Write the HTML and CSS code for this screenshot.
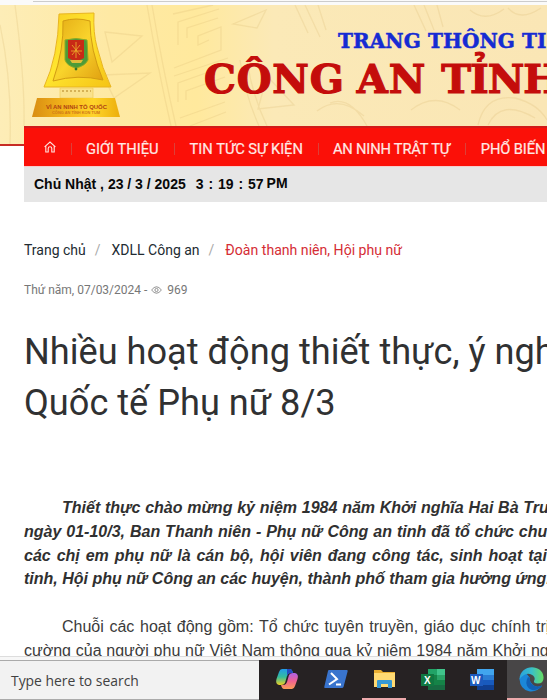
FILE: index.html
```html
<!DOCTYPE html>
<html lang="vi">
<head>
<meta charset="utf-8">
<title>Công an tỉnh</title>
<link rel="stylesheet" href="styles.css">
</head>
<body>
<div class="chrome"></div>
<header class="banner">
  <svg class="pattern" width="547" height="139" viewBox="0 5 547 139" fill="none" stroke="#d9ba72" stroke-opacity=".24" stroke-width="1.3">
    <path d="M0 25Q12 80 10 144M15 5Q25 80 24 126M105 32L142 36L112 62ZM103 75L150 73L114 98ZM147 5Q158 70 171 126M152 5Q163 70 176 126"/>
    <path d="M173 14L213 5M178 45V22L219 9M187 38V28L218 18M174 68L221 50V27L198 36V45L209 40M174 76L228 58M178 102V83L220 68M186 100V91L225 77M180 118L225 102M190 126L226 112"/>
    <path d="M233 24L266 10L257 28ZM295 5L308 33M305 5L320 37M318 5L326 30M414 5L426 31M424 5L434 30M437 5L443 27M267 76L294 105L258 109ZM240 60Q245 95 259 126M247 60Q252 95 267 126M317 111Q339 94 364 116M330 103Q350 95 367 126M411 110Q435 91 460 110M478 125Q485 94 515 98Q538 104 547 120M488 125Q501 98 535 118M470 10Q485 23 504 9M508 8Q520 22 541 8"/>
  </svg>
  <svg class="logo" width="90" height="108" viewBox="32 12 90 108">
    <defs>
      <linearGradient id="gold" x1="0" y1="0" x2="1" y2="1"><stop offset="0" stop-color="#f8cd22"/><stop offset=".45" stop-color="#ffe52f"/><stop offset="1" stop-color="#f5c316"/></linearGradient>
      <linearGradient id="inner" x1="0" y1="0" x2="1" y2="1"><stop offset="0" stop-color="#e3aa14"/><stop offset=".5" stop-color="#f9d42c"/><stop offset="1" stop-color="#e0a010"/></linearGradient>
      <linearGradient id="base"><stop offset="0" stop-color="#d98d12"/><stop offset=".45" stop-color="#f8bd1d"/><stop offset=".7" stop-color="#ffd52b"/><stop offset="1" stop-color="#ecae0c"/></linearGradient>
    </defs>
    <path d="M59 14L94 13Q93 33 97 47Q102 68 111 87L44 87Q58 57 59 14Z" fill="url(#gold)" stroke="#e9b51f"/>
    <path d="M63 21Q76 17 90 21Q90 50 103 80Q78 74 53 81Q64 49 63 21Z" fill="url(#inner)" stroke="#d29b13"/>
    <path d="M60 88H93V98H60Z" fill="#fae28c" stroke="#efca51" stroke-width=".6"/>
    <path d="M62 91H91" stroke="#d6b257" stroke-width="2" stroke-dasharray="2 2"/>
    <path d="M37 98H115L120 117H32Z" fill="url(#base)"/>
    <path d="M65 40Q76 37 87 40L88 60Q85 66 76 68Q67 66 65 60Z" fill="#4d9b38" stroke="#8baa28"/>
    <path d="M68 40H84V58L76 62L68 58Z" fill="#c82a16"/>
    <path d="M76 42V58M72 45L80 55M80 45L72 55M71 51H82" stroke="#edb52b" stroke-width=".8"/>
    <path d="M70 60H83L81 63H72Z" fill="#e1bd39"/><circle cx="76" cy="69" r="1.4" fill="#377527"/>
    <text x="46" y="109.4" textLength="61" lengthAdjust="spacingAndGlyphs" class="logo-main">VÌ AN NINH TỔ QUỐC</text>
    <text x="52" y="114" textLength="48" lengthAdjust="spacingAndGlyphs" class="logo-sub">CÔNG AN TỈNH KON TUM</text>
  </svg>
  <div class="titles"><div class="portal">TRANG THÔNG TIN</div><div class="agency">CÔNG AN <span class="tinh">TỈNH</span></div></div>
</header>
<nav class="nav">
  <svg class="home" width="12" height="12" viewBox="0 0 12 12" fill="none" stroke="#ffe4df" stroke-width="1.1"><path d="M.6 5.8L6 1L11.4 5.8M1.8 5V11H4.2V7.5Q4.2 5.8 6 5.8T7.8 7.5V11H10.2V5"/></svg>
  <i class="sep"></i><span class="n1">GIỚI THIỆU</span><i class="sep"></i><span class="n2">TIN TỨC SỰ KIỆN</span><i class="sep"></i><span class="n3">AN NINH TRẬT TỰ</span><i class="sep"></i><span class="n4">PHỔ BIẾN</span>
</nav>
<div class="clock"><span class="date">Chủ Nhật , 23 / 3 / 2025</span><span class="time">3 : 19 : 57</span><span class="pm">PM</span></div>
<main>
  <div class="crumbs"><span class="c1">Trang chủ</span><i>/</i><span class="c2">XDLL Công an</span><i>/</i><span class="c3">Đoàn thanh niên, Hội phụ nữ</span></div>
  <div class="meta"><span class="posted">Thứ năm, 07/03/2024 -</span><svg width="11" height="8" viewBox="0 0 11 8" fill="none" stroke="#777" stroke-width=".8"><path d="M.6 4Q5.5-2.5 10.4 4Q5.5 10.5.6 4Z"/><circle cx="5.5" cy="4" r="1.6"/></svg><span>969</span></div>
  <h1><span class="h-a">Nhiều hoạt động thiết thực, ý nghĩa</span><br><span class="h-b">Quốc tế Phụ nữ 8/3</span></h1>
  <p class="lead"><span class="l1">Thiết thực chào mừng kỷ niệm 1984 năm Khởi nghĩa Hai Bà Trưng</span><span class="l2">ngày 01-10/3, Ban Thanh niên - Phụ nữ Công an tỉnh đã tổ chức chuỗi</span><span class="l3">các chị em phụ nữ là cán bộ, hội viên đang công tác, sinh hoạt tại</span><span class="l4">tỉnh, Hội phụ nữ Công an các huyện, thành phố tham gia hưởng ứng.</span></p>
  <p class="body"><span class="b1">Chuỗi các hoạt động gồm: Tổ chức tuyên truyền, giáo dục chính trị</span><span class="b2">cường của người phụ nữ Việt Nam thông qua kỷ niệm 1984 năm Khởi nghĩa</span></p>
</main>
<footer class="taskbar">
  <div class="search">Type here to search</div>
  <div class="apps">
    <div class="app"><svg width="24" height="24" viewBox="0 0 24 24"><defs><linearGradient id="ca" x1="0" y1="0" x2="0" y2="1"><stop stop-color="#219bea"/><stop offset=".5" stop-color="#35bc9b"/><stop offset="1" stop-color="#efcf22"/></linearGradient><linearGradient id="cb" x1="0" y1="0" x2="0" y2="1"><stop stop-color="#ad61e8"/><stop offset=".5" stop-color="#ef6192"/><stop offset="1" stop-color="#fb9c55"/></linearGradient></defs><path d="M7 2H15Q17 2 18 6H15Q13 6 12 9L10 16Q9 18 6 18H4Q0 17 1.500 12L4 5Q5 2 7 2Z" fill="url(#ca)"/><path d="M17 22H9Q7 22 6 18H9Q11 18 12 15L14 8Q15 6 18 6H20Q24 7 22.500 12L20 19Q19 22 17 22Z" fill="url(#cb)"/><path d="M12 2H15Q17 2 18 6H15Q13 6 12 9Z" fill="#244bc0"/></svg></div>
    <div class="app"><svg width="24" height="20" viewBox="0 0 24 20"><path d="M5 1H23Q24 1 23.600 2.500L19.500 18Q19 19 18 19H1Q0 19 .3 17.800L4 2Q4.200 1 5 1Z" fill="#3974cd"/><path d="M7 4L13 10L5 15.500M12 15.500H17" fill="none" stroke="#fff" stroke-width="2"/></svg></div>
    <div class="app open"><svg width="23" height="20" viewBox="0 0 23 20"><path d="M1 1H8L10 3H22V18H1Z" fill="#e9ae31"/><path d="M1 4H22V18H1Z" fill="#ffda72"/><path d="M4 19V12Q4 11 5 11H18Q19 11 19 12V19H15V15H8V19Z" fill="#3699d4"/></svg></div>
    <div class="app"><svg width="25" height="23" viewBox="0 0 25 23"><path d="M7 1H24V22H7Z" fill="#158347"/><path d="M7 1H16V7H7Z" fill="#21a366"/><path d="M16 1H24V7H16Z" fill="#40c48b"/><path d="M16 7H24V12H16Z" fill="#2aa367"/><path d="M7 17H24V22H7Z" fill="#176b42"/><path d="M0 6H13V18H0Z" fill="#107741"/><text x="3" y="16" class="letter">X</text></svg></div>
    <div class="app"><svg width="25" height="23" viewBox="0 0 25 23"><path d="M7 1H24V7H7Z" fill="#41a5ee"/><path d="M7 7H24V12H7Z" fill="#2b7cd3"/><path d="M7 12H24V17H7Z" fill="#185abd"/><path d="M7 17H24V22H7Z" fill="#103f91"/><path d="M0 6H13V18H0Z" fill="#1c5abd"/><text x="1" y="16" class="letter">W</text></svg></div>
    <div class="app open active"><svg width="25" height="25" viewBox="0 0 25 25"><defs><linearGradient id="ed"><stop stop-color="#2aa3dc"/><stop offset=".5" stop-color="#39bfc9"/><stop offset="1" stop-color="#67dd62"/></linearGradient></defs><path d="M.5 12Q1 22 10 24.300Q18 25.500 23 18.500Q18 21 14 18Q10 15 11 11L7 6Q2 7 .5 12Z" fill="#1b87d8"/><path d="M9 10Q5 17 10 21.500Q15 25 21 21Q23 20 23 18.500Q18 21 14 18Q10 15 11 11Z" fill="#1260b4"/><path d="M.5 12.500C1-4 24-3 24.500 10Q25 16.500 18.500 16.500Q14.500 16.500 15 14Q16.800 11 14 8.500Q10 5.500 5 8Q2 9.500 .5 12.500Z" fill="url(#ed)"/></svg></div>
  </div>
</footer>
</body>
</html>
```
FILE: styles.css
```css
* { box-sizing: border-box; }
body { margin: 0; width: 547px; height: 700px; overflow: hidden; background: #fff; font-family: Roboto, sans-serif; color: #333; display: flex; flex-direction: column; white-space: nowrap; }
i { font-style: normal; }
.chrome { height: 5px; flex: none; background: linear-gradient(#ccc, #ccc) 33px 1px / 100% 1px no-repeat #fafafa; }
.banner { height: 141px; flex: none; position: relative; display: flex; overflow: hidden; border-bottom: 2px solid #c72c25; background: linear-gradient(90deg, #fdedb7 0, #fee9a4 20%, #ffe99d 36%, #fbe9b7 50%, #fae6b5 100%); }
.pattern { position: absolute; inset: 0; }
.logo { margin: 7px 0 0 32px; flex: none; position: relative; }
.logo-main { font: bold 5.500px "Liberation Sans", sans-serif; fill: #b04312; }
.logo-sub { font: bold 3.500px "Liberation Sans", sans-serif; fill: #cf7619; }
.titles { position: relative; margin-left: 82px; padding-top: 24px; font-family: "DejaVu Serif", serif; font-weight: bold; }
.portal { margin-left: 134px; font-size: 20px; line-height: 24px; color: #162bd3; letter-spacing: .1px; -webkit-text-stroke: .5px #162bd3; }
.agency { margin-top: 3px; font-size: 40px; line-height: 46px; color: #c40d0b; letter-spacing: .8px; word-spacing: -2.500px; -webkit-text-stroke: 1.200px #c40d0b; }
.tinh { margin-left: 3px; letter-spacing: -1px; }
.nav { position: relative; margin: -20px 0 0 24px; height: 40px; flex: none; overflow: hidden; background: #fb1008; border-top: 2px solid #d11b19; display: flex; align-items: center; padding: 3px 0 0 20px; font-size: 14.700px; line-height: 18px; font-weight: 400; color: #ffe9e5; -webkit-text-stroke: .2px #ffe9e5; }
.n3 { letter-spacing: -.2px; margin-left: -1px; }
.n4 { letter-spacing: -.1px; }
.home { flex: none; margin-top: -3px; }
.sep { width: 1px; height: 12px; background: #dc4039; margin: 0 15px; flex: none; }
.home + .sep { margin-right: 14px; }
.clock { margin-left: 24px; height: 36px; flex: none; background: #e6e6e6; border-top: 1px solid #f5cccc; padding: 8px 0 0 10px; display: flex; font: bold 14px/18px "Liberation Sans", sans-serif; color: #080808; }
.time { margin-left: 10px; word-spacing: 1px; }
.pm { margin-left: 3px; margin-top: -1px; }
main { height: 454px; flex: none; overflow: hidden; padding: 38px 0 0 24px; }
.crumbs { display: flex; font-size: 14px; line-height: 20px; color: #222b32; }
.crumbs i { color: #aaa; margin: 0 11px 0 9px; }
.c3 { color: #d52d35; font-size: 14.100px; }
.meta { margin-top: 21px; display: flex; align-items: center; font-size: 12px; line-height: 18px; color: #777; }
.meta svg { margin: 0 5px 0 4px; }
h1 { margin: 27px 0 0; font-size: 36.150px; line-height: 51px; font-weight: 400; color: #303132; }
.lead, .body { margin: 68px 0 0; font: italic bold 16px/23.800px "Liberation Sans", sans-serif; color: #303030; }
.body { margin-top: 24px; font-style: normal; font-weight: normal; color: #3b3b3b; }
.lead span, .body span { display: block; }
.lead .l1, .body .b1 { margin-left: 38px; }
.l1 { word-spacing: .3px; }
.l2 { word-spacing: .5px; }
.l3 { word-spacing: 1.500px; }
.b1 { word-spacing: 1.200px; }
.b2 { word-spacing: .3px; }
.taskbar { height: 44px; flex: none; display: flex; overflow: hidden; background: #f7f7f7; border-top: 1px solid #ddd; padding-top: 3px; }
.search { width: 259px; flex: none; border: solid #aaa; border-width: 1px 0; background: #f2f2f2; padding-left: 11px; font: 13.900px/39px "Open Sans", sans-serif; color: #414141; }
.apps { display: flex; flex: none; background: #262223; padding-left: 3px; }
.app { width: 49px; display: flex; align-items: center; justify-content: center; border-bottom: 2px solid transparent; flex: none; }
.open { border-image: linear-gradient(90deg, transparent 4px, #edaaac 4px, #edaaac 44px, transparent 44px) 2; }
.active { background: #484647; border-color: #edaaac; border-image: none; }
.letter { font: bold 10px "Liberation Sans", sans-serif; fill: #fff; }
```
